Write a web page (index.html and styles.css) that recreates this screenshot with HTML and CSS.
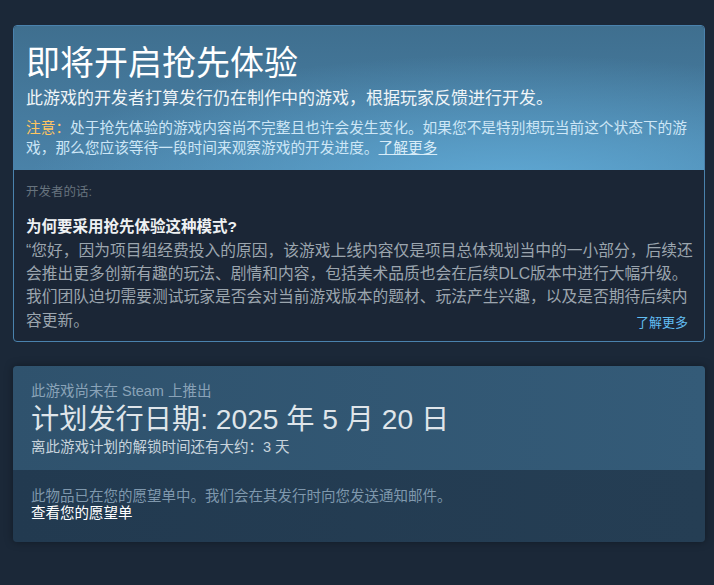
FILE: index.html
```html
<!DOCTYPE html>
<html lang="zh-CN">
<head>
<meta charset="utf-8">
<title>抢先体验</title>
<link rel="stylesheet" href="styles.css">
</head>
<body>
<div class="page">
  <section class="ea-box">
    <div class="ea-head">
      <h1 class="ea-title">即将开启抢先体验</h1>
      <p class="ea-sub">此游戏的开发者打算发行仍在制作中的游戏，根据玩家反馈进行开发。</p>
      <p class="ea-notice"><span class="ea-warn">注意：</span>处于抢先体验的游戏内容尚不完整且也许会发生变化。如果您不是特别想玩当前这个状态下的游戏，那么您应该等待一段时间来观察游戏的开发进度。<a class="ea-link" href="#">了解更多</a></p>
    </div>
    <div class="ea-dev">
      <div class="dev-label">开发者的话:</div>
      <h2 class="dev-q">为何要采用抢先体验这种模式?</h2>
      <p class="dev-text">“您好，因为项目组经费投入的原因，该游戏上线内容仅是项目总体规划当中的一小部分，后续还会推出更多创新有趣的玩法、剧情和内容，包括美术品质也会在后续DLC版本中进行大幅升级。我们团队迫切需要测试玩家是否会对当前游戏版本的题材、玩法产生兴趣，以及是否期待后续内容更新。</p>
      <div class="dev-more"><a href="#">了解更多</a></div>
    </div>
  </section>

  <section class="rel-box">
    <div class="rel-top">
      <div class="rel-note">此游戏尚未在 Steam 上推出</div>
      <div class="rel-date">计划发行日期: 2025 年 5 月 20 日</div>
      <div class="rel-count">离此游戏计划的解锁时间还有大约：3 天</div>
    </div>
    <div class="rel-bottom">
      <div class="rel-wish">此物品已在您的愿望单中。我们会在其发行时向您发送通知邮件。</div>
      <a class="rel-link" href="#">查看您的愿望单</a>
    </div>
  </section>
</div>
</body>
</html>
```

FILE: styles.css
```css
html, body {
  margin: 0;
  padding: 0;
}
body {
  background: #1b2838;
  font-family: "Liberation Sans", "Noto Sans CJK SC", sans-serif;
  height: 585px;
  overflow: hidden;
}
.page {
  padding: 25px 9px 0 13px;
  display: flex;
  flex-direction: column;
  gap: 24px;
}
.ea-box {
  border: 1px solid #4a82ad;
  border-radius: 4px;
  overflow: hidden;
  background: #1b2636;
}
.ea-head {
  padding: 17px 4px 11px 12px;
  background:
    radial-gradient(ellipse 70% 90% at 72% 110%, rgba(96, 170, 214, 0.95) 0%, rgba(96, 170, 214, 0) 100%),
    linear-gradient(180deg, #3f6f8f 0%, #4a82a8 100%);
}
.ea-title {
  margin: 0;
  font-size: 34px;
  line-height: 40px;
  font-weight: normal;
  color: #ffffff;
}
.ea-sub {
  margin: 5px 0 0;
  font-size: 17px;
  line-height: 22px;
  color: #f0f5f8;
}
.ea-notice {
  margin: 7.5px 0 0;
  font-size: 14.7px;
  line-height: 20.5px;
  color: #cde6f6;
}
.ea-warn {
  color: #ffc561;
}
.ea-link {
  color: #d8ecf8;
  text-decoration: underline;
}
.ea-dev {
  padding: 13px 10px 9px 12px;
}
.dev-label {
  font-size: 12.5px;
  line-height: 18px;
  color: #67737e;
}
.dev-q {
  margin: 16px 0 0;
  font-size: 15.5px;
  line-height: 20px;
  font-weight: bold;
  color: #eef1f3;
}
.dev-text {
  margin: 2.3px 0 0;
  font-size: 15.75px;
  line-height: 23.3px;
  color: #9ba5ae;
}
.dev-more {
  display: flex;
  justify-content: flex-end;
  margin-top: -17.5px;
  padding-right: 6px;
}
.dev-more a {
  font-size: 13px;
  line-height: 18px;
  color: #62bdf2;
  text-decoration: none;
}
.rel-box {
  border-radius: 4px;
  overflow: hidden;
  box-shadow: 0 0 8px rgba(0, 0, 0, 0.35);
}
.rel-top {
  padding: 16px 18px 14px;
  background: linear-gradient(90deg, #2f526d 0%, #345b78 100%);
}
.rel-note {
  font-size: 14.5px;
  line-height: 18px;
  color: #8aa3b8;
}
.rel-date {
  margin-top: 3px;
  font-size: 28.2px;
  line-height: 32px;
  color: #dfe5ea;
}
.rel-count {
  margin-top: 3px;
  font-size: 14.5px;
  line-height: 18px;
  color: #c7d3dc;
}
.rel-bottom {
  padding: 17.5px 18px 20.5px;
  background: linear-gradient(90deg, #223a50 0%, #253e54 100%);
  display: flex;
  flex-direction: column;
  align-items: flex-start;
}
.rel-wish {
  font-size: 14.5px;
  line-height: 17px;
  color: #7f98ad;
}
.rel-link {
  font-size: 14.5px;
  line-height: 17px;
  color: #ffffff;
  text-decoration: none;
}
```
